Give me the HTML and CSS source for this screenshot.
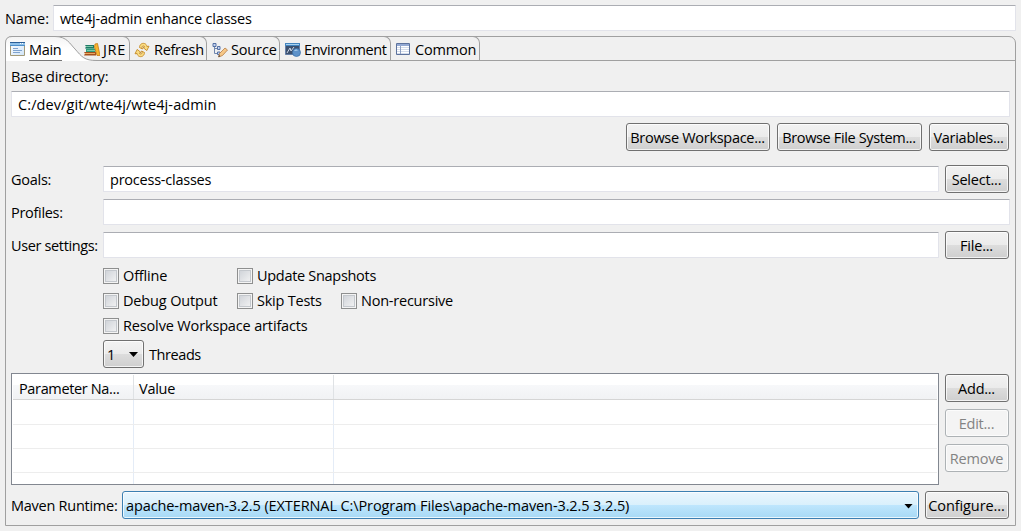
FILE: index.html
```html
<!DOCTYPE html>
<html lang="en">
<head>
<meta charset="utf-8">
<title>Run Configuration</title>
<link rel="stylesheet" href="styles.css">
</head>
<body>
<div class="name-row">
  <label class="name-label"><span class="t t-name">Name:</span></label>
  <div class="field"><span class="t t-namev">wte4j-admin enhance classes</span></div>
</div>
<div class="panel">
  <div class="tabs">
    <div class="tab main">
      <svg class="shape" width="100" height="26" viewBox="0 0 100 26"><defs><linearGradient id="g" x2="0" y2="1"><stop offset="0" stop-color="#f4f4f4"/><stop offset=".5" stop-color="#fff"/></linearGradient></defs><path d="M0 25V7Q0 .5 7 .5H50C62 .5 65 8 70 13C77 21 79 24.500 92 24.500V25Z" fill="url(#g)"/><path d="M.5 26V7Q.5 .5 7 .5H50C62 .5 65 8 70 13C77 21 79 24.500 92 24.500H100" fill="none" stroke="#a0a0a0"/></svg>
      <svg class="icon" width="16" height="16" viewBox="0 0 16 16"><defs><linearGradient id="w" x2="1" y2="1"><stop offset="0" stop-color="#fff"/><stop offset="1" stop-color="#cfe4f8"/></linearGradient></defs><path d="M1.500 1.500H15.500V14.500H1.500Z" fill="url(#w)" stroke="#a39a78"/><path d="M1 1H16V5H1Z" fill="#8fc0e8"/><path d="M1 1.500H16" stroke="#2c5f97"/><path d="M1 4.500H16" stroke="#4e8fca"/><path d="M11 2H12V3H11ZM13 2H14V3H13Z" fill="#fff"/><path d="M4 7.500H9M4 9.500H13M4 11.500H11" stroke="#7fa3cf"/></svg>
      <span class="t t-main">Main</span>
    </div>
    <div class="tab jre">
      <svg class="icon" width="16" height="16" viewBox="0 0 16 16"><path d="M1 3H10V6.500H1L2 4.500Z" fill="#1f7a66"/><path d="M2 6.500H11.500V10H2Z" fill="#2f9c7a"/><path d="M0 10H12V13.500H0L1 11.500Z" fill="#a4501d"/><path d="M2 4.500H9M3 8.500H11" stroke="#7cc7a8"/><path d="M1 11.500H11" stroke="#e9a860"/><path d="M11 2L13.500 1.500L16 13.500H13L10.500 5Z" fill="#f7b52e" stroke="#c77a15" stroke-width=".8"/></svg>
      <span class="t t-jre">JRE</span>
    </div>
    <div class="tab refresh">
      <svg class="icon" width="16" height="16" viewBox="0 0 16 16"><g fill="#f9dc83" stroke="#c58a27" stroke-width=".9" stroke-linejoin="round"><path id="a" d="M5.500 5.500C5.500 2.500 8 .8 10.500 1.500C12 2 12.800 3.200 12.900 4.500L15 4.200L12.800 8.600L9 5.500L10.700 5C10.300 3.800 8.500 3.500 7.800 5L8.500 7Z"/><path d="M10.500 10.500C10.500 13.500 8 15.200 5.500 14.500C4 14 3.200 12.800 3.100 11.500L1 11.800L3.200 7.400L7 10.500L5.300 11C5.700 12.200 7.500 12.500 8.200 11L7.500 9Z"/></g></svg>
      <span class="t t-refresh">Refresh</span>
    </div>
    <div class="tab source">
      <svg class="icon" width="16" height="16" viewBox="0 0 16 16"><path d="M2.500 4V11.500H7M2.500 6.500H7" fill="none" stroke="#7187ae"/><path d="M1 1.500H4V4.500H1ZM5.500 4.500H8V7.500H5.500ZM5.500 10H8V12.500H5.500Z" fill="#c5d4ef" stroke="#5571a5"/><path d="M6.500 15L7.500 11.500L13 6L15.500 8L10.500 13.500Z" fill="#f6c787" stroke="#b67d48" stroke-width=".8"/><path d="M6.500 15L7 13L8.300 14.200Z" fill="#333"/></svg>
      <span class="t t-source">Source</span>
    </div>
    <div class="tab env">
      <svg class="icon" width="16" height="16" viewBox="0 0 16 16"><path d="M.5 1.500H14.500V12.500H.5Z" fill="#3c506e" stroke="#647fa7"/><path d="M0 1H15V4H0Z" fill="#4283bd"/><path d="M1 2.500H14" stroke="#a9d2ef"/><path d="M2 11L5 6L6 9L9 5" fill="none" stroke="#cbd6e5"/><circle cx="11.500" cy="10.500" r="4" fill="#5d92ca" stroke="#386ea7" stroke-width=".7"/><path d="M9 9Q11 6.500 13 8.500Z" fill="#b2d4ef"/></svg>
      <span class="t t-env">Environment</span>
    </div>
    <div class="tab common">
      <svg class="icon" width="16" height="16" viewBox="0 0 16 16"><path d="M.5 1.500H13.500V12.500H.5Z" fill="#fff" stroke="#5d729c"/><path d="M1 2H13V4H1Z" fill="#93a9d3"/><path d="M1 5.500H13M1 7.500H13M1 9.500H13M1 11.500H13" stroke="#d2dbea"/><path d="M4.500 4V12" stroke="#8fa0c2"/></svg>
      <span class="t t-common">Common</span>
    </div>
  </div>
  <div class="content">
    <div class="base-label"><span class="t t-base">Base directory:</span></div>
    <div class="field"><span class="t t-basev">C:/dev/git/wte4j/wte4j-admin</span></div>
    <div class="browse">
      <button class="btn bw"><span class="t t-bw">Browse Workspace...</span></button>
      <button class="btn bf"><span class="t t-bf">Browse File System...</span></button>
      <button class="btn bv"><span class="t t-bv">Variables...</span></button>
    </div>
    <div class="form">
      <div class="row"><label><span class="t t-goals">Goals:</span></label><div class="field"><span class="t t-goalsv">process-classes</span></div><button class="btn side"><span class="t t-select">Select...</span></button></div>
      <div class="row"><label><span class="t t-prof">Profiles:</span></label><div class="field"></div></div>
      <div class="row"><label><span class="t t-user">User settings:</span></label><div class="field"></div><button class="btn side"><span class="t t-file">File...</span></button></div>
    </div>
    <div class="checks">
      <label class="check"><i class="box"></i><span class="t t-off">Offline</span></label>
      <label class="check wide"><i class="box"></i><span class="t t-upd">Update Snapshots</span></label>
      <label class="check"><i class="box"></i><span class="t t-debug">Debug Output</span></label>
      <label class="check"><i class="box"></i><span class="t t-skip">Skip Tests</span></label>
      <label class="check"><i class="box"></i><span class="t t-non">Non-recursive</span></label>
      <label class="check full"><i class="box"></i><span class="t t-res">Resolve Workspace artifacts</span></label>
    </div>
    <div class="threads"><div class="btn combo small"><span class="t">1</span><i class="arrow"></i></div><span class="t t-thr">Threads</span></div>
    <div class="params">
      <div class="table">
        <div class="tr head"><div class="td"><span class="t t-pn">Parameter Na...</span></div><div class="td"><span class="t t-val">Value</span></div><div class="td"></div></div>
        <div class="tr first"><div class="td"></div><div class="td"></div><div class="td"></div></div>
        <div class="tr"><div class="td"></div><div class="td"></div><div class="td"></div></div>
        <div class="tr"><div class="td"></div><div class="td"></div><div class="td"></div></div>
        <div class="tr last"><div class="td"></div><div class="td"></div><div class="td"></div></div>
      </div>
      <div class="actions">
        <button class="btn side"><span class="t t-add">Add...</span></button>
        <button class="btn side off" disabled><span class="t t-edit">Edit...</span></button>
        <button class="btn side off" disabled><span class="t t-rem">Remove</span></button>
      </div>
    </div>
    <div class="runtime">
      <label><span class="t t-run">Maven Runtime:</span></label>
      <div class="btn combo hot"><span class="t t-runv">apache-maven-3.2.5 (EXTERNAL C:\Program Files\apache-maven-3.2.5 3.2.5)</span><i class="arrow"></i></div>
      <button class="btn conf"><span class="t t-conf">Configure...</span></button>
    </div>
  </div>
</div>
</body>
</html>
```
FILE: styles.css
```css
* { box-sizing: border-box; }
body { margin: 0; width: 1021px; height: 531px; padding: 5px 5px 5px; overflow: hidden; background: #f0f0f0; color: #000; font: 14.5px/20px "Open Sans", "Noto Sans", sans-serif; }
.t { display: inline-block; white-space: nowrap; letter-spacing: -0.2px; }
.name-row { display: flex; height: 26px; align-items: center; }
.name-label { width: 48px; padding-top: 1px; }
.field { flex: 1; height: 26px; padding: 3px 6px 0; background: #fff; border: 1px solid #e2e3ea; border-top-color: #abadb3; border-radius: 1px; }
.panel { margin-top: 5px; width: 1011px; height: 490px; border: 1px solid #a0a0a0; border-radius: 7px 7px 0 0; }
.tabs { display: flex; height: 25px; margin: -1px -1px 0; border-bottom: 1px solid #a0a0a0; }
.tab { display: flex; position: relative; padding-top: 3px; height: 25px; border-right: 1px solid #a0a0a0; border-top: 1px solid #a0a0a0; border-top-right-radius: 7px; }
.tab:last-child, .tabs { border-top-right-radius: 7px; }
.tab .icon { flex: none; margin-top: 2px; margin-right: 3px; }
.tab .t { position: relative; }
.tab.main { width: 78px; padding-left: 4px; padding-top: 4px; border: 0; }
.main .icon { position: relative; margin-top: 1px; margin-right: 4px; }
.main .t { height: 21px; border-bottom: 1px solid #777; padding-right: 1px; }
.shape { position: absolute; left: 0; top: 0; }
.jre { width: 47px; padding-left: 1px; }
.refresh { width: 77px; padding-left: 4px; }
.refresh .icon { margin-right: 4px; }
.source { width: 73px; padding-left: 5px; }
.env { width: 111px; padding-left: 5px; }
.common { width: 89px; padding-left: 5px; }
.content { padding: 6px 5px 0; }
.base-label { height: 24px; }
.content > .field { height: 26px; }
.browse { display: flex; justify-content: flex-end; gap: 7px; margin: 6px 1px 0 0; }
.btn { display: flex; align-items: center; justify-content: center; height: 28px; padding: 2px 1px 0 0; border: 1px solid #707070; border-radius: 3px; background: linear-gradient(#f2f2f2 0, #ebebeb 50%, #dddddd 50%, #cfcfcf); box-shadow: inset 0 0 0 1px rgba(255,255,255,.75); color: #000; font: inherit; line-height: 20px; }
.bw { width: 144px; }
.bf { width: 145px; }
.bv { width: 80px; }
.form { margin-top: 14px; display: grid; gap: 5px; }
.row { display: flex; height: 28px; align-items: center; }
.row label { width: 92px; padding-top: 1px; }
.side { width: 64px; margin: 0 1px 0 6px; }
.checks { display: grid; grid-template-columns: 134px 104px 200px; grid-auto-rows: 25px; margin: 4px 0 0 92px; }
.check { display: flex; align-items: center; gap: 4px; }
.wide { grid-column: 2 / 4; }
.full { grid-column: 1 / 4; }
.box { width: 16px; height: 16px; border: 1px solid #8e8f8f; background: linear-gradient(135deg, #cbcfd5, #f6f6f6); box-shadow: inset 0 0 0 1px #f4f4f4, inset 0 0 0 2px #c4c8cd; }
.threads { display: flex; align-items: center; gap: 5px; margin: 2px 0 0 92px; height: 28px; }
.threads > .t { padding-top: 1px; }
.combo { justify-content: space-between; padding: 1px 5px 0 3px; }
.small { width: 41px; }
.arrow { width: 9px; height: 5px; background: #000; clip-path: polygon(0 0, 100% 0, 50% 100%); }
.params { display: flex; margin-top: 5px; }
.table { width: 928px; height: 112px; border: 1px solid #828790; background: #fff; overflow: hidden; padding: 1px; }
.tr { display: grid; grid-template-columns: 121px 200px 1fr; height: 24px; border-bottom: 1px solid #ededed; }
.td { border-right: 1px solid #e4ecf7; }
.td:last-child { border: 0; }
.head { height: 25px; border-bottom-color: #d5d5d5; background: linear-gradient(#fff 0, #fff 40%, #f7f8fa 40%, #f1f2f4); }
.head .td { padding: 4px 0 0 6px; border-color: #dfe2e5; }
.head .td + .td { padding-left: 5px; }
.first { height: 25px; }
.last { border: 0; }
.actions { display: grid; gap: 7px; align-content: start; padding-top: 1px; }
.off { border-color: #adb2b5; background: #f4f4f4; color: #838383; }
.runtime { display: flex; align-items: center; margin-top: 6px; height: 28px; }
.runtime label { width: 111px; padding-top: 1px; }
.hot { width: 797px; padding-top: 2px; border-color: #3c7fb1; background: linear-gradient(#eaf6fd 0, #d9f0fc 50%, #bee6fd 50%, #a7d9f5); }
.conf { width: 84px; margin-left: 6px; }

/* tracking per label */
.t-name, .t-runv, .t-conf { letter-spacing: -.1px; }
.t-basev { letter-spacing: .1px; }
.t-jre { letter-spacing: .7px; }
.t-source, .t-off, .t-debug, .t-res, .t-rem { letter-spacing: -.15px; }
.t-base, .t-skip, .t-non, .t-goalsv, .t-edit { letter-spacing: -.23px; }
.t-bv, .t-add, .t-run, .t-goals, .t-val { letter-spacing: -.26px; }
.t-main, .t-refresh, .t-bw, .t-prof, .t-upd { letter-spacing: -.3px; }
.t-bf, .t-user, .t-pn { letter-spacing: -.36px; }
.t-env, .t-thr { letter-spacing: -.42px; }
```
